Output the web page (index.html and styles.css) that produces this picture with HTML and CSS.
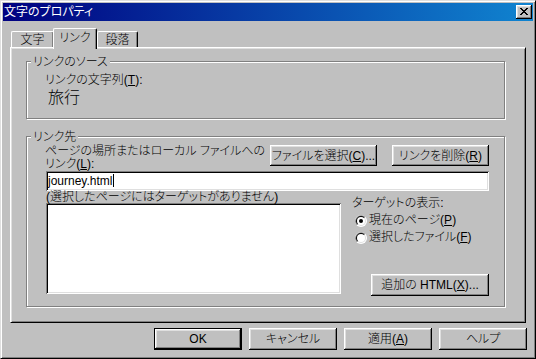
FILE: index.html
```html
<!DOCTYPE html>
<html lang="ja">
<head>
<meta charset="utf-8">
<title>文字のプロパティ</title>
<link rel="stylesheet" href="styles.css">
</head>
<body>
<div class="window">
  <div class="titlebar">
    <span class="title">文字のプロパティ</span>
    <button class="close" type="button" aria-label="閉じる">
      <svg width="8" height="7" viewBox="0 0 8 7"><path fill="#000" d="M0 0h2v1H0zM6 0h2v1H6zM1 1h2v1H1zM5 1h2v1H5zM2 2h4v1H2zM3 3h2v1H3zM2 4h4v1H2zM1 5h2v1H1zM5 5h2v1H5zM0 6h2v1H0zM6 6h2v1H6z"/></svg>
    </button>
  </div>
  <div class="client">
    <div class="tabs">
      <div class="tab tab-first">文字</div>
      <div class="tab tab-selected">リンク</div>
      <div class="tab tab-last">段落</div>
    </div>
    <div class="panel">
      <div class="group group-source">
        <div class="legend">リンクのソース</div>
        <div class="label label-text">リンクの文字列(<u>T</u>):</div>
        <div class="linktext">旅行</div>
      </div>
      <div class="group group-target">
        <div class="legend">リンク先</div>
        <div class="row-top">
          <div class="label label-wrap">ページの場所またはローカル ファイルへの<br>リンク(<u>L</u>):</div>
          <button class="btn btn-select" type="button">ファイルを選択(<u>C</u>)...</button>
          <button class="btn btn-remove" type="button">リンクを削除(<u>R</u>)</button>
        </div>
        <div class="field">journey.html<span class="caret"></span></div>
        <div class="row-bottom">
          <div class="col-left">
            <div class="label label-list">(選択したページにはターゲットがありません)</div>
            <div class="listbox"></div>
          </div>
          <div class="col-right">
            <div class="label label-target">ターゲットの表示:</div>
            <div class="radio-row">
              <svg class="radio" width="12" height="12" viewBox="0 0 12 12"><circle cx="6" cy="6" r="6" fill="#fff"/><path d="M1.76 10.24A6 6 0 0 1 10.24 1.76L6 6Z" fill="#808080"/><circle cx="6" cy="6" r="5" fill="#dfdfdf"/><path d="M2.46 9.54A5 5 0 0 1 9.54 2.46L6 6Z" fill="#000"/><circle cx="6" cy="6" r="4" fill="#fff"/><circle cx="6" cy="6" r="2" fill="#000"/></svg>
              <span>現在のページ(<u>P</u>)</span>
            </div>
            <div class="radio-row">
              <svg class="radio" width="12" height="12" viewBox="0 0 12 12"><circle cx="6" cy="6" r="6" fill="#fff"/><path d="M1.76 10.24A6 6 0 0 1 10.24 1.76L6 6Z" fill="#808080"/><circle cx="6" cy="6" r="5" fill="#dfdfdf"/><path d="M2.46 9.54A5 5 0 0 1 9.54 2.46L6 6Z" fill="#000"/><circle cx="6" cy="6" r="4" fill="#fff"/></svg>
              <span>選択したファイル(<u>F</u>)</span>
            </div>
            <button class="btn btn-html" type="button">追加の HTML(<u>X</u>)...</button>
          </div>
        </div>
      </div>
    </div>
    <div class="footer">
      <button class="btn btn-foot btn-default" type="button">OK</button>
      <button class="btn btn-foot" type="button">キャンセル</button>
      <button class="btn btn-foot" type="button">適用(<u>A</u>)</button>
      <button class="btn btn-foot" type="button">ヘルプ</button>
    </div>
  </div>
</div>
</body>
</html>
```
FILE: styles.css
```css
* { box-sizing: border-box; }
html, body { margin: 0; padding: 0; }
body {
  width: 536px;
  height: 359px;
  overflow: hidden;
  background: #c0c0c0;
  color: #000;
  font-family: "Liberation Sans", "Noto Sans CJK JP", sans-serif;
  font-size: 12px;
  font-weight: 300;
  line-height: 13px;
  font-feature-settings: "palt";
}
u { text-decoration: underline; text-underline-offset: 1px; }

.window {
  width: 536px;
  height: 359px;
  display: flex;
  flex-direction: column;
  padding: 2px;
  background: #c0c0c0;
  border: 1px solid;
  border-color: #dfdfdf #000 #000 #dfdfdf;
  box-shadow: inset 1px 1px #fff, inset -1px -1px #808080;
}

.titlebar {
  flex: none;
  height: 18px;
  display: flex;
  align-items: center;
  padding: 1px 1px 0 1px;
  background: linear-gradient(to right, #000080, #1084d0);
  color: #fff;
}
.title { line-height: 13px; font-weight: 400; }
.close {
  margin-left: auto;
  margin-top: -1px;
  width: 16px;
  height: 14px;
  padding: 3px 0 0 4px;
  border: 0;
  background: #c0c0c0;
  display: flex;
  align-items: flex-start;
  justify-content: flex-start;
  box-shadow: inset -1px -1px #000, inset 1px 1px #fff, inset -2px -2px #808080, inset 2px 2px #dfdfdf;
}
.close svg { display: block; }

.client {
  flex: 1;
  display: flex;
  flex-direction: column;
  padding: 7px 7px 0 7px;
}

.tabs {
  flex: none;
  height: 19px;
  display: flex;
  align-items: flex-end;
  padding-left: 1px;
}
.tab {
  height: 16px;
  padding-top: 2px;
  text-align: center;
  background: #c0c0c0;
  border-left: 1px solid #fff;
  border-top: 1px solid #fff;
  border-right: 1px solid #000;
  border-radius: 2px 2px 0 0;
  box-shadow: inset -1px 0 #808080;
}
.tab-first { width: 43px; margin-right: -1px; }
.tab-selected {
  position: relative;
  z-index: 1;
  width: 44px;
  height: 21px;
  margin-bottom: -2px;
  padding-top: 3px;
}
.tab-last { width: 41px; }

.panel {
  flex: none;
  height: 276px;
  padding: 13px 20px 0 15px;
  border: 1px solid;
  border-color: #fff #000 #000 #fff;
  box-shadow: inset 1px 1px #dfdfdf, inset -1px -1px #808080;
}

.group {
  border: 1px solid #808080;
  box-shadow: inset 1px 1px #fff, 1px 1px #fff;
  padding: 0 15px 0 18px;
}
.group-source { height: 58px; }
.group-target { height: 171px; margin-top: 17px; display: flex; flex-direction: column; }

.legend {
  align-self: flex-start;
  width: max-content;
  margin: -6px 0 0 -14px;
  padding: 0 2px;
  background: #c0c0c0;
  line-height: 12px;
}

.label-text { margin-top: 6px; }
.linktext {
  margin: 2px 0 0 3px;
  font-size: 16px;
  line-height: 18px;
}

.row-top {
  margin-top: 1px;
  display: flex;
  align-items: flex-start;
}
.label-wrap { flex: 1; line-height: 13px; padding-top: 1px; }

.btn {
  font: inherit;
  color: #000;
  padding: 1px 0 0 0;
  border: 0;
  background: #c0c0c0;
  display: flex;
  align-items: center;
  justify-content: center;
  line-height: 13px;
  box-shadow: inset -1px -1px #000, inset 1px 1px #fff, inset -2px -2px #808080, inset 2px 2px #dfdfdf;
}
.btn-select { width: 107px; height: 21px; margin-top: 1px; }
.btn-remove { width: 97px; height: 21px; margin-top: 1px; margin-left: 15px; }

.field {
  margin: 0 0 0 1px;
  height: 20px;
  padding: 2px 0 0 2px;
  background: #fff;
  line-height: 16px;
  box-shadow: inset 1px 1px #808080, inset -1px -1px #fff, inset 2px 2px #000, inset -2px -2px #dfdfdf;
}
.caret {
  display: inline-block;
  width: 1px;
  height: 13px;
  margin-left: 1px;
  background: #000;
  vertical-align: -2px;
}

.row-bottom {
  display: flex;
  align-items: flex-start;
}
.col-left {
  width: 295px;
  margin-left: 1px;
}
.label-list { line-height: 12px; }
.listbox {
  height: 91px;
  background: #fff;
  box-shadow: inset 1px 1px #808080, inset -1px -1px #fff, inset 2px 2px #000, inset -2px -2px #dfdfdf;
}

.col-right {
  margin-left: auto;
  width: 137px;
  display: flex;
  flex-direction: column;
  padding-top: 6px;
}
.label-target { height: 17px; }
.radio-row {
  height: 17px;
  display: flex;
  align-items: flex-start;
  padding-left: 3px;
}
.radio { flex: none; margin: 1px 2px 0 0; display: block; }
.btn-html {
  align-self: flex-end;
  width: 118px;
  height: 22px;
  margin-top: 26px;
}

.footer {
  margin-top: 5px;
  margin-right: -1px;
  display: flex;
  justify-content: flex-end;
  gap: 7px;
}
.btn-foot { width: 88px; height: 22px; }
.btn-default {
  border: 1px solid #000;
  box-shadow: inset -1px -1px #000, inset 1px 1px #fff, inset -2px -2px #808080, inset 2px 2px #dfdfdf;
}
```
